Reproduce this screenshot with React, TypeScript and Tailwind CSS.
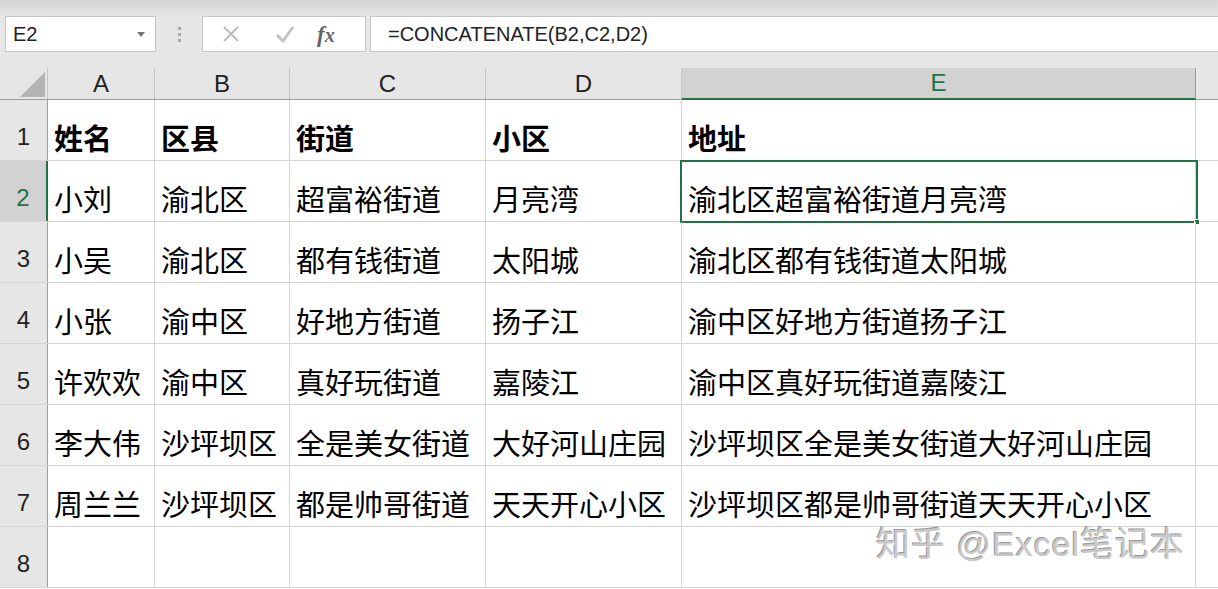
const cols = [
  { key: 'A', w: 'w-[107px]' },
  { key: 'B', w: 'w-[135px]' },
  { key: 'C', w: 'w-[196px]' },
  { key: 'D', w: 'w-[196px]' },
  { key: 'E', w: 'w-[514px]' },
];

const rows: string[][] = [
  ['姓名', '区县', '街道', '小区', '地址'],
  ['小刘', '渝北区', '超富裕街道', '月亮湾', '渝北区超富裕街道月亮湾'],
  ['小吴', '渝北区', '都有钱街道', '太阳城', '渝北区都有钱街道太阳城'],
  ['小张', '渝中区', '好地方街道', '扬子江', '渝中区好地方街道扬子江'],
  ['许欢欢', '渝中区', '真好玩街道', '嘉陵江', '渝中区真好玩街道嘉陵江'],
  ['李大伟', '沙坪坝区', '全是美女街道', '大好河山庄园', '沙坪坝区全是美女街道大好河山庄园'],
  ['周兰兰', '沙坪坝区', '都是帅哥街道', '天天开心小区', '沙坪坝区都是帅哥街道天天开心小区'],
  ['', '', '', '', ''],
];

const font = "font-['Liberation_Sans','Noto_Sans_CJK_SC',sans-serif]";

function FormulaBar() {
  return (
    <div className="h-[68px] bg-[#e6e6e6] bg-gradient-to-b from-[#d4d4d4] via-[#e6e6e6] via-[22%] to-[#e6e6e6] flex items-start pt-[16px] pl-[5px]">
      <div className="w-[151px] h-[36px] bg-white border border-[#c6c6c6] flex items-center justify-between pl-[7px] pr-[10px]">
        <span className="text-[20px] text-[#222]">E2</span>
        <span className="w-0 h-0 border-l-[4px] border-r-[4px] border-t-[5px] border-l-transparent border-r-transparent border-t-[#777]" />
      </div>
      <div className="w-[46px] h-[36px] flex flex-col items-center justify-center gap-[3px]">
        <span className="w-[3px] h-[3px] bg-[#a8a8a8]" />
        <span className="w-[3px] h-[3px] bg-[#a8a8a8]" />
        <span className="w-[3px] h-[3px] bg-[#a8a8a8]" />
      </div>
      <div className="w-[164px] h-[36px] bg-white border border-[#c6c6c6] flex items-center pl-[18px]">
        <svg width="20" height="20" viewBox="0 0 20 20" className="mr-[34px]">
          <path d="M3 3 L17 17 M17 3 L3 17" stroke="#bdbdbd" strokeWidth="2" fill="none" />
        </svg>
        <svg width="20" height="20" viewBox="0 0 20 20" className="mr-[22px]">
          <path d="M2 11 L8 17 L18 3" stroke="#c4c4c4" strokeWidth="3" fill="none" />
        </svg>
        <span className="text-[23px] italic text-[#666] font-['Liberation_Serif',serif] font-bold leading-none">
          f<span className="text-[20px]">x</span>
        </span>
      </div>
      <div className="ml-[4px] flex-1 h-[36px] bg-white border border-[#c6c6c6] border-r-0 flex items-center pl-[17px]">
        <span className="text-[20px] text-[#222]">=CONCATENATE(B2,C2,D2)</span>
      </div>
    </div>
  );
}

function HeaderRow() {
  return (
    <div className="flex h-[32px] bg-[#e6e6e6] border-b border-[#9e9e9e]">
      <div className="w-[48px] shrink-0 relative border-r border-[#c6c6c6]">
        <svg width="26" height="26" viewBox="0 0 26 26" className="absolute left-[20px] top-[4px]">
          <path d="M25 0 L25 25 L0 25 Z" fill="#b4b4b4" />
        </svg>
      </div>
      {cols.map((c) => (
        <div
          key={c.key}
          className={`${c.w} shrink-0 flex items-center justify-center text-[24px] border-r border-[#c6c6c6] ${
            c.key === 'E'
              ? 'bg-[#d2d2d2] text-[#217346] border-b-2 border-b-[#217346] mb-[-1px] border-r-[#9e9e9e]'
              : 'text-[#222]'
          }`}
        >
          {c.key}
        </div>
      ))}
      <div className="flex-1" />
    </div>
  );
}

function Row({ idx, cells }: { idx: number; cells: string[] }) {
  const selected = idx === 2;
  return (
    <div className="flex h-[61px] border-b border-[#d4d4d4]">
      <div
        className={`w-[48px] shrink-0 flex items-end justify-center pb-[5px] text-[24px] border-r ${
          selected
            ? 'bg-[#d2d2d2] text-[#217346] border-r-2 border-r-[#217346]'
            : 'bg-[#e6e6e6] text-[#222] border-r-[#9e9e9e]'
        }`}
      >
        {idx}
      </div>
      {cols.map((c, i) => (
        <div
          key={c.key}
          className={`${c.w} shrink-0 relative flex items-end pl-[6px] pb-[2px] text-[29px] leading-[36px] whitespace-nowrap text-black border-r border-[#d4d4d4] ${
            idx === 1 ? 'font-bold' : ''
          }`}
        >
          {cells[i]}
          {selected && c.key === 'E' && (
            <div className="absolute left-[-2px] top-[-1px] right-[-3px] bottom-[-2px] border-2 border-[#217346] pointer-events-none">
              <div className="absolute right-[-4px] bottom-[-4px] w-[6px] h-[6px] bg-[#217346] border border-white" />
            </div>
          )}
        </div>
      ))}
      <div className="flex-1" />
    </div>
  );
}

export default function App() {
  return (
    <div className={`w-[1218px] h-[589px] overflow-hidden bg-white relative ${font}`}>
      <FormulaBar />
      <HeaderRow />
      {rows.map((r, i) => (
        <Row key={i} idx={i + 1} cells={r} />
      ))}
      <div className="absolute left-[876px] top-[519px] text-[34px] text-[#c8c8c8] tracking-[1px] [text-shadow:1px_1px_0_#ffffff,-1px_-1px_0_#9a9a9a] whitespace-nowrap">
        知乎 @Excel笔记本
      </div>
    </div>
  );
}
